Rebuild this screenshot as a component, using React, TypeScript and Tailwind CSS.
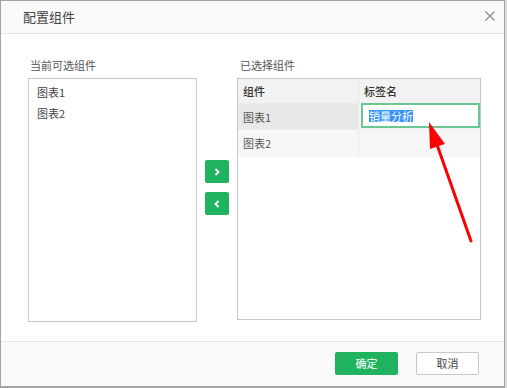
import React from "react";

const font = { fontFamily: '"Noto Sans CJK SC", "Noto Sans", sans-serif' };

export default function App() {
  return (
    <div className="w-[507px] h-[388px] bg-[#dcdcdc] overflow-hidden" style={font}>
      <div className="w-[505px] h-[388px] border-l border-t border-r border-b-2 border-[#a4a4a4] bg-white flex flex-col relative">
        {/* header */}
        <div className="h-[33px] shrink-0 bg-[#fafafa] border-b border-[#e3e3e3] flex items-center justify-between pl-[22px] pr-[8px]">
          <span className="text-[13px] text-[#444]">配置组件</span>
          <svg width="12" height="12" viewBox="0 0 12 12" className="-mt-[2px]">
            <path d="M1.5 1.5 L10.5 10.5 M10.5 1.5 L1.5 10.5" stroke="#8a8a8a" strokeWidth="1.2" />
          </svg>
        </div>

        {/* body */}
        <div className="flex-1 flex pl-[27px] pt-[23px]">
          {/* left */}
          <div className="flex flex-col w-[169px]">
            <div className="text-[11px] leading-[16px] text-[#555] pl-[2px] mb-[5px]">当前可选组件</div>
            <div className="h-[244px] border border-[#c8c8c8] pt-[3px]">
              <div className="h-[21px] leading-[21px] text-[11px] text-[#444] pl-[8px]">图表1</div>
              <div className="h-[21px] leading-[21px] text-[11px] text-[#444] pl-[8px]">图表2</div>
            </div>
          </div>

          {/* middle buttons */}
          <div className="w-[24px] mx-[8px] flex flex-col gap-[9px] pt-[103px]">
            <div className="w-[24px] h-[23px] rounded-[2px] bg-[#1fb35f] flex items-center justify-center">
              <svg width="8" height="8" viewBox="0 0 8 8">
                <path d="M2.5 1 L5.5 4 L2.5 7" stroke="white" strokeWidth="1.8" fill="none" />
              </svg>
            </div>
            <div className="w-[24px] h-[23px] rounded-[2px] bg-[#1fb35f] flex items-center justify-center">
              <svg width="8" height="8" viewBox="0 0 8 8">
                <path d="M5.5 1 L2.5 4 L5.5 7" stroke="white" strokeWidth="1.8" fill="none" />
              </svg>
            </div>
          </div>

          {/* right */}
          <div className="flex flex-col w-[244px]">
            <div className="text-[11px] leading-[16px] text-[#555] pl-[3px] mb-[5px]">已选择组件</div>
            <div className="h-[242px] border border-[#c8c8c8]">
              <div className="flex h-[24px] bg-[#f2f2f2] text-[11px] font-medium text-[#333]">
                <div className="w-[121px] border-r border-[#e6e6e6] pl-[5px] flex items-center">组件</div>
                <div className="flex-1 pl-[5px] flex items-center">标签名</div>
              </div>
              <div className="flex h-[26px] text-[11px] text-[#555]">
                <div className="w-[121px] bg-[#e8e8e8] border-r border-[#eeeeee] pl-[5px] flex items-center pt-[2px]">图表1</div>
                <div className="flex-1 bg-[#f7f7f7] pl-[2px] pb-[1px]">
                  <div className="h-[25px] border-2 border-[#6cc693] bg-white flex items-center pl-[6px]">
                    <span className="bg-[#3593fb] text-white leading-[12px] h-[12px] text-[11px]">销量分析</span>
                  </div>
                </div>
              </div>
              <div className="flex h-[28px] bg-[#f7f7f7] text-[11px] text-[#555] border-t border-[#eeeeee]">
                <div className="w-[121px] border-r border-[#ececec] pl-[5px] flex items-center">图表2</div>
                <div className="flex-1" />
              </div>
            </div>
          </div>
        </div>

        {/* footer */}
        <div className="h-[45px] shrink-0 bg-[#fafafa] border-t border-[#e3e3e3] flex items-center justify-end gap-[18px] pr-[25px] pb-[1px]">
          <div className="w-[63px] h-[23px] rounded-[2px] bg-[#1fb35f] text-white text-[11px] flex items-center justify-center">确定</div>
          <div className="w-[63px] h-[23px] rounded-[2px] bg-white border border-[#c8c8c8] text-[#444] text-[11px] flex items-center justify-center">取消</div>
        </div>

        {/* red arrow annotation */}
        <svg className="absolute left-0 top-0 pointer-events-none" width="507" height="388">
          <line x1="470" y1="240" x2="434" y2="138" stroke="#ff0000" strokeWidth="3" strokeLinecap="round" />
          <polygon points="428,121 429,148 444,143" fill="#ff0000" />
        </svg>
      </div>
    </div>
  );
}
